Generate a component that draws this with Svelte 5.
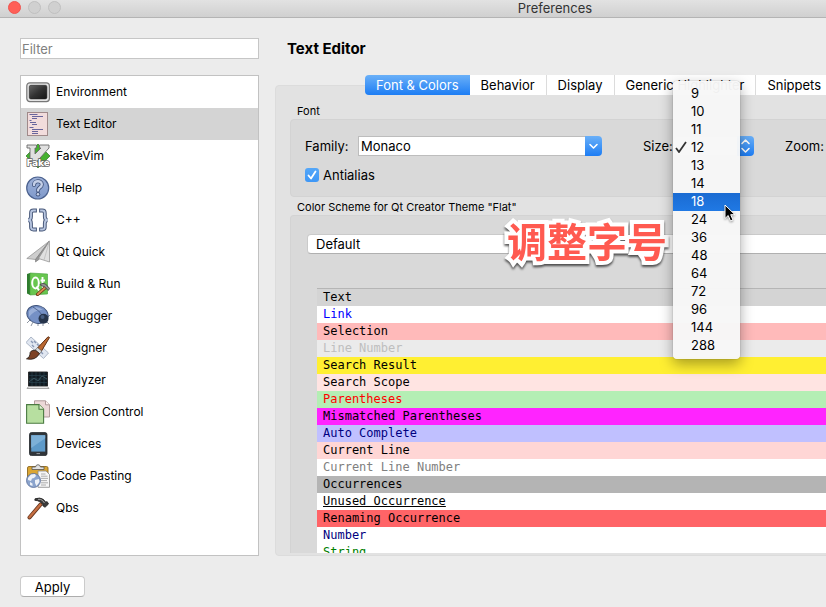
<script>
  const pages = [
    'Environment', 'Text Editor', 'FakeVim', 'Help', 'C++', 'Qt Quick', 'Build & Run',
    'Debugger', 'Designer', 'Analyzer', 'Version Control', 'Devices', 'Code Pasting', 'Qbs'
  ];
  const tabs = ['Font & Colors', 'Behavior', 'Display', 'Generic Highlighter', 'Snippets'];
  const sizes = [9, 10, 11, 12, 13, 14, 18, 24, 36, 48, 64, 72, 96, 144, 288];
  const styles = [
    ['Text', 'text'], ['Link', 'link'], ['Selection', 'selection'], ['Line Number', 'line-number'],
    ['Search Result', 'result'], ['Search Scope', 'scope'], ['Parentheses', 'paren'],
    ['Mismatched Parentheses', 'mismatch'], ['Auto Complete', 'auto'], ['Current Line', 'current'],
    ['Current Line Number', 'current-number'], ['Occurrences', 'occurrences'],
    ['Unused Occurrence', 'unused'], ['Renaming Occurrence', 'renaming'],
    ['Number', 'number'], ['String', 'string']
  ];

  let page = $state('Text Editor');
  let tab = $state('Font & Colors');
  let size = $state(12);
  let hovered = $state(18);
  let family = $state('Monaco');
  let antialias = $state(true);
  let filter = $state('');
</script>

{#snippet icon(name)}
  <svg class="icon" viewBox="0 0 24 24" aria-hidden="true">
    {#if name === 'Environment'}
      <defs>
        <linearGradient id="screen" x1="0" y1="0" x2="1" y2="1">
          <stop offset="0" stop-color="#666" /><stop offset=".5" stop-color="#333" /><stop offset="1" stop-color="#151515" />
        </linearGradient>
      </defs>
      <rect x=".8" y="2.800" width="22.600" height="18.800" rx="3" fill="#e4e4e4" stroke="#777" stroke-width="1.200" />
      <rect x="3.300" y="5.300" width="17.600" height="13.600" rx="1.600" fill="url(#screen)" stroke="#222" stroke-width=".6" />
    {:else if name === 'Text Editor'}
      <rect x="1.500" y=".5" width="20" height="23" fill="#f2dcdc" stroke="#a08a8a" />
      <path d="M3.500 2.500h8M6 4.500h11M6 6.500h5M3.500 8.500h2M4 10.500h6M6 12.500h5M3.500 15.500h4M6 17.500h11M6 19.500h6M6 21.500h6" stroke="#68659c" stroke-width="1" />
    {:else if name === 'FakeVim'}
      <path d="M12 0 24 12 12 24 0 12Z" fill="#45b030" stroke="#1f5f1a" stroke-width=".6" />
      <path d="M1 1h9.500v3H9v6l6-6h-1.500V1H23v3L9.500 19H4V4H1Z" fill="#e0e0e0" stroke="#6a6a6a" stroke-width=".9" />
      <text x="12.200" y="22" text-anchor="middle" class="fake-mark">Fake</text>
    {:else if name === 'Help'}
      <defs>
        <linearGradient id="help" x1="0" y1="0" x2="0" y2="1">
          <stop offset="0" stop-color="#9eb1d8" /><stop offset="1" stop-color="#7f99cb" />
        </linearGradient>
      </defs>
      <circle cx="11.700" cy="12" r="11" fill="url(#help)" stroke="#4c628f" stroke-width="1.200" />
      <path d="M8 9c0-5 7.800-4.800 7.800-.6 0 3-3.800 3-3.800 6" fill="none" stroke="#3f527b" stroke-width="4" stroke-linecap="round" />
      <circle cx="12" cy="18.200" r="2.200" fill="#3f527b" />
      <path d="M8 9c0-5 7.800-4.800 7.800-.6 0 3-3.800 3-3.800 6" fill="none" stroke="#c5d0e8" stroke-width="2.400" stroke-linecap="round" />
      <circle cx="12" cy="18.200" r="1.300" fill="#c5d0e8" />
    {:else if name === 'C++'}
      <g fill="none" stroke-linecap="square">
        <path d="M9 2.500H7.500Q5 2.500 5 5v3.500Q5 12 2.200 12 5 12 5 15.500V19q0 2.500 2.500 2.500H9M15 2.500h1.300q2.500 0 2.500 2.500v3.500q0 3.500 2.800 3.500-2.800 0-2.800 3.500V19q0 2.500-2.500 2.500H15" stroke="#49597a" stroke-width="3.800" />
        <path d="M9 2.500H7.500Q5 2.500 5 5v3.500Q5 12 2.200 12 5 12 5 15.500V19q0 2.500 2.500 2.500H9M15 2.500h1.300q2.500 0 2.500 2.500v3.500q0 3.500 2.800 3.500-2.800 0-2.800 3.500V19q0 2.500-2.500 2.500H15" stroke="#b8c6e0" stroke-width="1.800" />
      </g>
    {:else if name === 'Qt Quick'}
      <path d="M23.500 1 .8 18.500l8.700 1Z" fill="#cecece" stroke="#8c8c8c" stroke-width=".7" />
      <path d="M23.500 1 9.500 19.500v2.500l4-3Z" fill="#969696" stroke="#777" stroke-width=".6" />
      <path d="m23.500 1-11 17.500L23.500 22Z" fill="#e0e0e0" stroke="#8c8c8c" stroke-width=".7" />
      <path d="M23.500 1 18 20" stroke="#b8b8b8" stroke-width=".7" />
    {:else if name === 'Build & Run'}
      <path d="m1 2 3-1v22l-3-1.500Z" fill="#2f7c2f" />
      <path d="M4 1 21.500 2v20L4 23Z" fill="#68c64f" stroke="#429d38" stroke-width=".6" />
      <ellipse cx="9.500" cy="11" rx="3.300" ry="5.400" fill="none" stroke="#fff" stroke-width="2" />
      <path d="m10.500 14.500 2.500 4M16.500 5v9q0 2 2.500 1.500M14.500 8.500H19" fill="none" stroke="#fff" stroke-width="1.900" />
      <path d="m11.500 22.500 8.500-7.500" stroke="#6b3515" stroke-width="3.200" stroke-linecap="round" />
      <path d="m11.700 22.200 8.200-7.200" stroke="#dc8a52" stroke-width="1.800" stroke-linecap="round" />
      <path d="M14 12.500q3-2 5.500-.5l4.200 4.500-1.500 2-3.700-3.800-3.500-1Z" fill="#929292" stroke="#333" stroke-width=".7" />
    {:else if name === 'Debugger'}
      <path d="M4 16 1 19M7 18l-2 4M12 19v3M17 20v2M21 18l2 2M22 13l2-2" stroke="#808996" stroke-width=".9" />
      <ellipse cx="11.500" cy="10.500" rx="10.800" ry="8.800" transform="rotate(18 11.500 10.500)" fill="#7590c5" stroke="#3c5078" stroke-width="1" />
      <path d="M3 7q7-7 14-1-8-1-14 7Z" fill="#a9bce0" opacity=".7" />
      <path d="M7 3q7 4 9 8" fill="none" stroke="#415783" stroke-width=".8" />
      <circle cx="17.500" cy="14.800" r="5" fill="#26344b" />
      <circle cx="16.500" cy="12.900" r="2" fill="#465c80" />
    {:else if name === 'Designer'}
      <path d="m5 1 17.500 16-5 5.500L0 6.500Z" fill="#e1e7f1" stroke="#a5b0c2" stroke-width=".9" />
      <path d="m5 5 2 2M8 5l2 2M11 8l2 2M6 9l2 2M15 16l2 2" stroke="#8998b5" stroke-width="1.400" />
      <path d="M23.500 1.500 15.500 15l-4-3L22 .8Z" fill="#bb6830" stroke="#603015" stroke-width="1" />
      <path d="m11.500 11.500 4.300 3.500-2.300 3-4.300-3.800Z" fill="#dadada" stroke="#555" stroke-width=".6" />
      <path d="M9.500 14.200q-6 0-5.500 4Q4 21.500.5 22.800q9 2.200 13-5.300Z" fill="#7d4225" stroke="#2d211b" stroke-width=".9" />
    {:else if name === 'Analyzer'}
      <path d="M2.500 4h19v14h-19Z" fill="#101a22" stroke="#222" stroke-width=".9" />
      <path d="M6 4v14M10 4v14M14 4v14M18 4v14M3 7.500h18M3 11h18M3 14.500h18" stroke="#2c4753" stroke-width=".6" />
      <path d="m3 14 5-4 4 3 4-5 5 3" fill="none" stroke="#4b6974" stroke-width=".7" />
      <path d="m2.500 18.500-1.500 2h22l-1.500-2Z" fill="#e7e7e7" stroke="#888" stroke-width=".7" />
    {:else if name === 'Version Control'}
      <path d="M8.500.8h11l4 4V17h-15Z" fill="#ecd8d8" stroke="#a99393" stroke-width=".9" />
      <path d="M19.500.8v4h4" fill="#fff3f3" stroke="#a99393" stroke-width=".9" />
      <path d="M.6 4.600h12.400l4.600 4.600v14H.6Z" fill="#b7dfa0" stroke="#4b7b42" stroke-width="1.100" />
      <path d="M13 4.600v4.600h4.600" fill="#e4f5d8" stroke="#4b7b42" stroke-width="1.100" />
    {:else if name === 'Devices'}
      <rect x="3.500" y=".6" width="17.500" height="23" rx="2" fill="#30353a" stroke="#202428" stroke-width=".8" />
      <path d="M5.200 3.200h14v16.400h-14Z" fill="#5e9ac9" />
      <path d="M5.200 3.200h14v3L5.200 16Z" fill="#7db0d7" />
      <rect x="10.500" y="21" width="3.500" height="1.100" fill="#8c9196" />
    {:else if name === 'Code Pasting'}
      <rect x="1.500" y="2.500" width="20.500" height="17" rx="1.500" fill="#dba633" stroke="#8c681f" stroke-width=".9" />
      <path d="M6 5.500V3h3.500q.5-2.300 2.500-2.300t2.500 2.300H18v2.500Z" fill="#e2e2e2" stroke="#555" stroke-width=".8" />
      <path d="M12 7h8l3.500 3.500v12.800H12Z" fill="#f6f6f6" stroke="#888" stroke-width=".8" />
      <path d="M15 10h4.500M15 12.200h6.500M15 14.400h7M15 16.600h6M15 18.800h7M15 21h5" stroke="#9a9a9a" stroke-width=".8" />
      <circle cx="7.500" cy="16.500" r="7" fill="#8ba4cd" stroke="#5a709a" stroke-width=".8" />
      <path d="m2 14 3-3.500 4-.5 1 2-2 2-2 .5-1 2.500-3-1Zm7 2 4-1 .5 3-3 4-1.500-3ZM4 18l2.500 1.500V22L4 21Z" fill="#eef2f8" />
    {:else}
      <path d="M3.500 21.500 14.500 8.500" stroke="#66351e" stroke-width="4" stroke-linecap="round" />
      <path d="M3.500 21.300 14.500 8.500" stroke="#c66f42" stroke-width="2.300" stroke-linecap="round" />
      <path d="M9 2.800q5-1.800 8.500.7L19.500 6l1.700-.3 1.300 2.300-3.500 3.300-2.200-1.600v-2l-3-1.900q-2-1.500-5-1.500Z" fill="#3c3c3c" stroke="#1c1c1c" stroke-width=".8" />
      <path d="M12 3.300q3-.3 4.500 1.200L18.500 7" fill="none" stroke="#b3b3b3" stroke-width=".9" />
    {/if}
  </svg>
{/snippet}

<div class="screen">
  <div class="window">
    <header class="titlebar">
      <div class="lights">
        <button class="light close" aria-label="Close"></button>
        <button class="light" aria-label="Minimize"></button>
        <button class="light" aria-label="Zoom window"></button>
      </div>
      <span>Preferences</span>
    </header>

    <div class="content">
      <aside>
        <input class="filter" type="text" placeholder="Filter" aria-label="Filter" bind:value={filter} />
        <nav>
          {#each pages as name}
            <button class="page" class:active={page === name} onclick={() => (page = name)}>
              {@render icon(name)}
              <span>{name}</span>
            </button>
          {/each}
        </nav>
      </aside>

      <main>
        <h1>Text Editor</h1>
        <div class="tabs" role="tablist">
          {#each tabs as name}
            <button role="tab" aria-selected={tab === name} class:active={tab === name} onclick={() => (tab = name)}>{name}</button>
          {/each}
        </div>

        <div class="panel">
          <h2>Font</h2>
          <section class="group font-group">
            <div class="font-row">
              <label class="family-label" for="family">Family:</label>
              <div class="combo">
                <input id="family" type="text" bind:value={family} />
                <button aria-label="Show font families">
                  <svg viewBox="0 0 17 20" aria-hidden="true"><path d="m5 8.500 3.500 3.500L12 8.500" /></svg>
                </button>
              </div>
              <label class="size-label" for="size">Size:</label>
              <div class="size">
                <select id="size" bind:value={size}>
                  {#each sizes as n}<option value={n}>{n}</option>{/each}
                </select>
                <svg class="stepper" viewBox="0 0 17 20" aria-hidden="true"><path d="M5 7.500 8.500 4 12 7.500M5 12.500 8.500 16l3.500-3.500" /></svg>
                <div class="menu">
                  {#each sizes as n}
                    <button class:hovered={hovered === n} onmouseenter={() => (hovered = n)} onclick={() => (size = n)}>
                      <span class="mark">
                        {#if size === n}
                          <svg viewBox="0 0 12 12" aria-hidden="true"><path d="m1 7 3 4 7-10" /></svg>
                        {/if}
                      </span>
                      {n}
                    </button>
                  {/each}
                  <svg class="pointer" viewBox="0 0 12 18" aria-hidden="true">
                    <path d="M1 1v13.500l3.200-3L6.500 17l2.500-1-2.300-5.300H11Z" />
                  </svg>
                </div>
              </div>
              <label class="zoom-label" for="zoom">Zoom:</label>
              <input id="zoom" class="zoom" type="text" value="100%" />
            </div>
            <label class="check">
              <input type="checkbox" bind:checked={antialias} />
              <span class="box"><svg viewBox="0 0 14 14" aria-hidden="true"><path d="m3.500 7.500 2.500 3 4.500-7" /></svg></span>
              Antialias
            </label>
          </section>

          <h2>Color Scheme for Qt Creator Theme "Flat"</h2>
          <section class="group scheme-group">
            <select class="scheme" aria-label="Color scheme">
              <option>Default</option>
            </select>
            <p class="note">调整字号</p>
            <ul>
              {#each styles as [name, kind]}
                <li class={kind}>{name}</li>
              {/each}
            </ul>
          </section>
        </div>
      </main>
    </div>

    <footer><button class="apply">Apply</button></footer>
  </div>
</div>

<style>
  :global(body) { margin: 0; }
  .screen { height: 100vh; overflow: hidden; background: #ececec; }
  .screen :is(button, input, select) { font: inherit; color: inherit; box-sizing: border-box; margin: 0; }
  .window {
    width: calc(100% + 284px);
    height: 100%;
    display: flex;
    flex-direction: column;
    font: 13px/16px Inter, "Liberation Sans", sans-serif;
    color: #000;
  }
  .titlebar {
    flex: none;
    display: grid;
    grid-template-columns: 1fr auto 1fr;
    height: 18px;
    box-sizing: border-box;
    border-bottom: 1px solid #b4b4b4;
    background: linear-gradient(#e2e2e2, #d0d0d0);
    color: #333;
  }
  .lights { display: flex; gap: 7px; padding: 1px 0 0 8px; }
  .light { width: 13px; height: 13px; padding: 0; border: 1px solid #c0c0c0; border-radius: 50%; background: #d0d0d0; }
  .screen .close { background: #ff5f57; border-color: #ef5550; }

  .content { flex: 1; min-height: 0; display: flex; gap: 16px; padding: 20px 20px 0; }
  aside { flex: none; width: 239px; display: flex; flex-direction: column; gap: 16px; }
  .filter { height: 21px; padding: 0 1px; border: 1px solid #c6c6c6; background: #fff; outline: none; }
  .filter::placeholder { color: #808080; opacity: 1; }
  nav { flex: 1; min-height: 0; overflow: hidden; border: 1px solid #c2c2c2; background: #fff; font-size: 12px; }
  .page { width: 100%; height: 32px; display: flex; align-items: center; gap: 6px; padding: 0 5px; border: 0; background: none; text-align: left; }
  .page.active { background: #d4d4d4; }
  .icon { width: 24px; height: 24px; flex: none; }
  .fake-mark { font: bold 9px "DejaVu Sans", sans-serif; fill: #fff; stroke: #666; stroke-width: 1.5px; paint-order: stroke; }

  main { flex: 1; min-width: 0; display: flex; flex-direction: column; }
  h1 { margin: 0 0 16px 12px; font-size: 15px; line-height: 22px; height: 21px; font-weight: 700; }
  .tabs { position: relative; display: flex; padding-left: 90px; margin-bottom: -10px; }
  .tabs button { height: 20px; padding: 0 11px; border: 0; border-right: 1px solid #dcdcdc; background: #fff; white-space: nowrap; }
  .tabs button.active { border: 0; border-radius: 4px 0 0 4px; background: linear-gradient(#6ab0f8, #1d7df4); color: #fff; }
  .panel {
    flex: 1;
    min-height: 0;
    display: flex;
    flex-direction: column;
    box-sizing: border-box;
    padding: 18px 15px 2px 14px;
    border: 1px solid #dcdcdc;
    border-radius: 4px;
    background: #e2e2e2;
  }
  h2 { margin: 0 0 0 7px; font-size: 11px; line-height: 15px; font-weight: 400; }
  .group { border: 1px solid #d3d3d3; background: #d9d9d9; box-sizing: border-box; }
  .font-group { flex: none; margin-bottom: 3px; padding: 16px 14px 13px; border-radius: 4px; }
  .font-row { display: flex; align-items: center; }
  .font-row > label { flex: none; }
  .family-label { width: 53px; }
  .combo { flex: none; display: flex; width: 244px; }
  .combo input { flex: 1; min-width: 0; height: 20px; padding: 0 2px; border: 1px solid #bdbdbd; border-right: 0; background: #fff; outline: none; }
  .combo button, .stepper { width: 17px; height: 20px; padding: 0; border: 0; border-radius: 0 4px 4px 0; background: linear-gradient(#6ab0f8, #1d7df4); }
  .combo svg { display: block; }
  .combo path, .stepper path { fill: none; stroke: #fff; stroke-width: 1.6; stroke-linecap: round; stroke-linejoin: round; }
  .size-label { margin-left: 41px; width: 30px; }
  .size { position: relative; flex: none; display: flex; width: 81px; }
  .size select { appearance: none; flex: 1; height: 20px; padding: 0 18px; border: 1px solid #c8c8c8; border-radius: 4px; background: #fff; }
  .stepper { position: absolute; right: 0; top: 0; }
  .menu {
    position: absolute;
    z-index: 3;
    top: -55px;
    left: 0;
    width: 67px;
    padding: 4px 0;
    border-radius: 4px;
    background: rgba(247, 247, 247, 0.97);
    box-shadow: 0 0 1px rgba(0, 0, 0, 0.5), 0 5px 14px rgba(0, 0, 0, 0.35);
  }
  .menu button { display: flex; align-items: center; width: 100%; height: 18px; padding: 0 0 2px; border: 0; background: none; }
  .menu button.hovered { background: linear-gradient(#1a6bd2, #2079e4); color: #fff; }
  .mark { display: flex; width: 18px; padding-left: 2px; box-sizing: border-box; }
  .mark svg { width: 12px; height: 12px; }
  .mark path { fill: none; stroke: #333; stroke-width: 1.8; }
  .pointer { position: absolute; left: 51px; top: 123px; width: 12px; height: 18px; filter: drop-shadow(0 1px 1px rgba(0, 0, 0, 0.4)); }
  .pointer path { fill: #000; stroke: #fff; stroke-width: 1; }
  .zoom-label { margin-left: 31px; width: 46px; }
  .zoom { width: 60px; height: 20px; border: 1px solid #bdbdbd; }
  .check { position: relative; display: flex; align-items: center; gap: 4px; width: max-content; margin-top: 11px; }
  .check input { position: absolute; opacity: 0; width: 14px; height: 14px; }
  .box { width: 14px; height: 14px; border-radius: 3px; background: #fff; }
  .box svg { display: none; }
  input:checked + .box { background: linear-gradient(#55a7f8, #3e97f6); }
  input:checked + .box svg { display: block; }
  .box path { fill: none; stroke: #fff; stroke-width: 1.8; stroke-linecap: round; stroke-linejoin: round; }

  .scheme-group { position: relative; flex: 1; min-height: 0; display: flex; flex-direction: column; padding: 18px 16px 0; border-bottom: 0; border-radius: 4px 4px 0 0; }
  .scheme { flex: none; appearance: none; height: 20px; padding: 0 8px; border: 1px solid #cacaca; border-bottom-color: #b0b0b0; border-radius: 4px; background: #fff; }
  .note {
    position: absolute;
    z-index: 2;
    left: 216px;
    top: -4px;
    margin: 0;
    font: 700 40px/56px "Noto Sans CJK SC", sans-serif;
    color: #ff5a50;
    -webkit-text-stroke: 8px #fff;
    paint-order: stroke fill;
    stroke-linejoin: round;
    filter: drop-shadow(0 2px 1px rgba(0, 0, 0, 0.65));
    white-space: nowrap;
  }
  ul { flex: 1; min-height: 0; overflow: hidden; list-style: none; margin: 34px 0 0 10px; padding: 0; border-top: 1px solid #b5b5b5; background: #fff; font: 12px/17px "DejaVu Sans Mono", monospace; }
  li { height: 17px; padding-left: 6px; }
  .text { background: #d4d4d4; }
  .link { color: #00f; }
  .selection { background: #ffbaba; }
  .line-number { background: #ebebeb; color: #bebebe; }
  .result { background: #ffef32; }
  .scope { background: #ffe4e2; }
  .paren { background: #b4eeb4; color: #f00; }
  .mismatch { background: #ff24ff; }
  .auto { background: #c0c0ff; color: #000080; }
  .current { background: #ffd6d5; }
  .current-number { color: #808080; }
  .occurrences { background: #b4b4b4; }
  .unused { text-decoration: underline; }
  .renaming { background: #ff6467; }
  .number { color: #000080; }
  .string { color: #008000; }

  footer { flex: none; padding: 20px 20px 10px; }
  .apply { display: block; width: 65px; height: 21px; padding: 0; border: 1px solid #cbcbcb; border-bottom-color: #adadad; border-radius: 4px; background: #fff; }
</style>
